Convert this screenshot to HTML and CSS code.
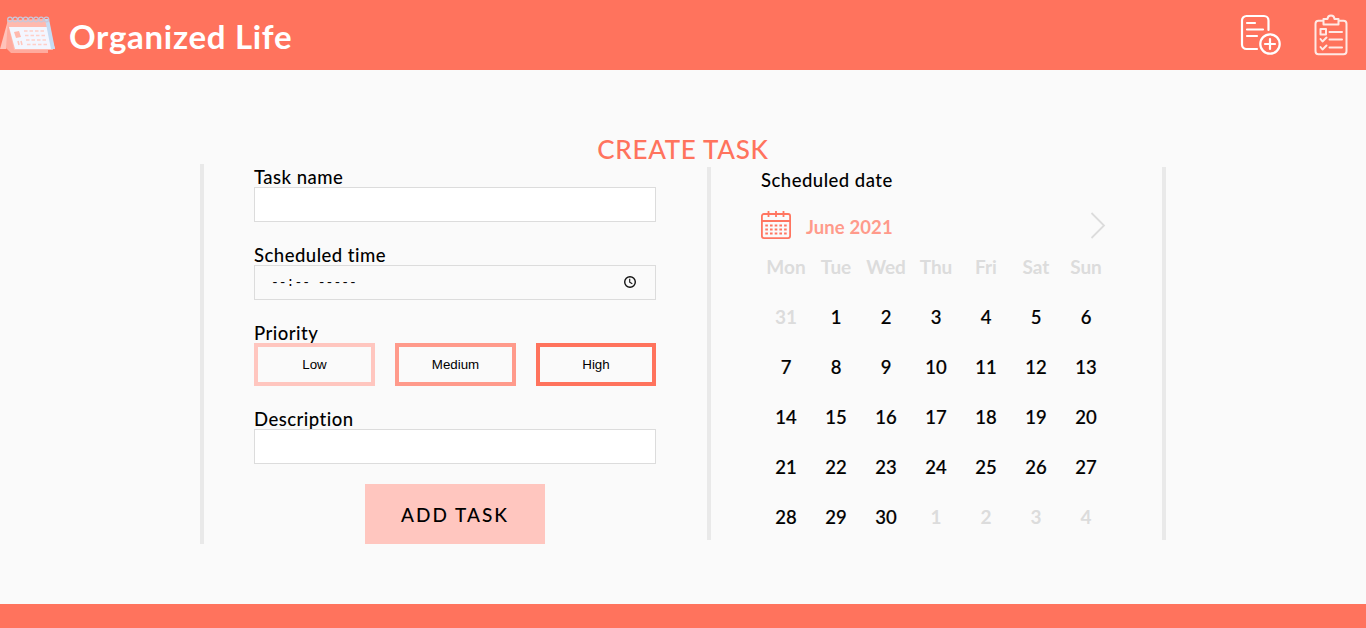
FILE: index.html
```html
<!DOCTYPE html>
<html lang="en">
<head>
<meta charset="utf-8">
<title>Organized Life</title>
<link rel="stylesheet" href="styles.css">
</head>
<body>
<header class="topbar">
  <svg class="logo" width="56" height="44" viewBox="0 0 56 44">
    <path d="M8 9 0 38h6l6-15z" fill="#ffc2b9"/>
    <path d="M8 9 6 37l5 5h37v-5z" fill="#ffaa9d"/>
    <path d="M7 9 14 39h39L46 8z" fill="#ffb9ae"/>
    <path d="m9 16 6 22h40L48 16z" fill="#f3f6ff"/>
    <path d="M45 8h4l6 30h-4z" fill="#c5dbf3"/>
    <g fill="none" stroke="#cbc6d8" stroke-width="1.300">
      <circle cx="10" cy="8.500" r="2.300"/><circle cx="15.200" cy="8.500" r="2.300"/><circle cx="20.400" cy="8.500" r="2.300"/><circle cx="25.600" cy="8.500" r="2.300"/><circle cx="30.800" cy="8.500" r="2.300"/><circle cx="36" cy="8.500" r="2.300"/><circle cx="41.200" cy="8.500" r="2.300"/><circle cx="46.400" cy="8.500" r="2.300"/>
    </g>
    <path d="m14 21 5-1 2 6-5 1z" fill="#ffb9ae"/>
    <path d="m18 30 1 4M21 30l1 4" stroke="#ffc6bd" stroke-width="1.500"/>
    <path d="M24 20h22M25 24.500h22M26 29h22M27 33.500h22" stroke="#ffcfc8" stroke-width="1.500" stroke-dasharray="3.500 2"/>
  </svg>
  <h1 class="brand">Organized Life</h1>
  <nav class="nav">
    <svg width="42" height="42" viewBox="0 0 42 42" fill="none" stroke="#fff" stroke-width="2.200" stroke-linecap="round">
      <path d="M17 35H6.500a4.500 4.500 0 0 1-4.500-4.500V6.500A4.500 4.500 0 0 1 6.500 2H24a4.500 4.500 0 0 1 4.500 4.500V16M7 9h8M7 15.500h16M7 22h10"/>
      <circle cx="30" cy="30" r="9.700"/><path d="M30 25v10M25 30h10"/>
    </svg>
    <svg width="34" height="42" viewBox="0 0 34 42" fill="none" stroke="#ffe9e5" stroke-width="2" stroke-linecap="round" stroke-linejoin="round">
      <path d="M8.500 6.800H4.500A3 3 0 0 0 1.500 9.800v27.500a3 3 0 0 0 3 3h25a3 3 0 0 0 3-3V9.800a3 3 0 0 0-3-3h-4"/>
      <path d="M9.500 10.500V5h4c.2-2.400 1.500-3.500 3.500-3.500S20.300 2.600 20.500 5h4v5.500z"/>
      <path d="M6.500 15h5.500v5.500H6.500zM15.500 18H28M15.500 25.500H28M15.500 33.500H28M6.500 25l2 2.500 4-4M6.500 33l2 2.500 4-4"/>
    </svg>
  </nav>
</header>
<main class="page">
  <h2 class="heading">CREATE TASK</h2>
  <div class="columns">
    <form class="form">
      <div class="field"><label class="label" for="name">Task name</label><input class="input" id="name" type="text"></div>
      <div class="field"><label class="label">Scheduled time</label>
        <div class="time"><span>--:-- -----</span>
          <svg class="clock" width="14" height="14" viewBox="0 0 14 14" fill="none" stroke="#111" stroke-width="1.400"><circle cx="7" cy="7" r="5.300"/><path d="M6.700 3.800v3.500l2.600 1.500" stroke-width="1.100"/></svg>
        </div>
      </div>
      <div class="field"><label class="label">Priority</label>
        <div class="levels"><button class="level low" type="button">Low</button><button class="level medium" type="button">Medium</button><button class="level high" type="button">High</button></div>
      </div>
      <div class="field"><label class="label" for="desc">Description</label><input class="input" id="desc" type="text"></div>
      <button class="submit" type="button">ADD TASK</button>
    </form>
    <section class="schedule">
      <div class="label">Scheduled date</div>
      <div class="month">
        <svg width="30" height="30" viewBox="0 0 30 30" fill="none" stroke="#ff7560" stroke-width="1.800">
          <rect x=".9" y="4" width="28.200" height="24.100" rx="2"/>
          <path d="M1 11h28M7.500 1v6M15 1v6M22.500 1v6" />
          <path d="M4.300 15.500h22M4.300 19.500h22M4.300 23.500h22" stroke-width="2" stroke-dasharray="2.600 2.100"/>
        </svg>
        <span class="month-name">June 2021</span>
        <svg class="next" width="16" height="28" viewBox="0 0 16 28" fill="none" stroke="#dcdcdc" stroke-width="1.800"><path d="m1.500 2 12.500 12.500L1.500 27"/></svg>
      </div>
      <div class="grid">
        <b>Mon</b><b>Tue</b><b>Wed</b><b>Thu</b><b>Fri</b><b>Sat</b><b>Sun</b>
        <b>31</b><span>1</span><span>2</span><span>3</span><span>4</span><span>5</span><span>6</span>
        <span>7</span><span>8</span><span>9</span><span>10</span><span>11</span><span>12</span><span>13</span>
        <span>14</span><span>15</span><span>16</span><span>17</span><span>18</span><span>19</span><span>20</span>
        <span>21</span><span>22</span><span>23</span><span>24</span><span>25</span><span>26</span><span>27</span>
        <span>28</span><span>29</span><span>30</span><b>1</b><b>2</b><b>3</b><b>4</b>
      </div>
    </section>
  </div>
</main>
<footer class="footer"></footer>
</body>
</html>
```
FILE: styles.css
```css
* { box-sizing: border-box; }
body { margin: 0; height: 628px; display: flex; flex-direction: column; overflow: hidden; background: #fafafa; color: #000; font-family: Lato, "Open Sans", sans-serif; font-variant-ligatures: none; }
.topbar { height: 70px; flex: none; display: flex; align-items: center; padding-right: 18px; background: #ff735d; }
.logo { margin: 0 13px 4px 0; }
.brand { margin: 1px 0 0; color: #fff; font-size: 33px; line-height: 40px; font-weight: 700; letter-spacing: .7px; white-space: nowrap; }
.nav { margin-left: auto; display: flex; gap: 32px; }
.page { flex: 1; padding-top: 64px; }
.heading { margin: 0; height: 30px; line-height: 30px; text-align: center; font-size: 26px; font-weight: 500; letter-spacing: .7px; color: #ff735d; }
.columns { display: flex; padding-left: 200px; align-items: flex-start; }
.form { width: 507px; height: 380px; padding: 0 51px 0 50px; border-left: 4px solid #e9e9e9; display: flex; flex-direction: column; gap: 20px; }
.field { display: flex; flex-direction: column; }
.label { height: 23px; line-height: 26px; font-size: 18.500px; font-weight: 500; letter-spacing: .48px; white-space: nowrap; }
.input { height: 35px; width: 100%; border: 1px solid #dcdcdc; background: #fff; padding: 0 16px; }
.time { height: 35px; display: flex; align-items: center; justify-content: space-between; padding: 0 18px 0 16px; border: 1px solid #dcdcdc; font-family: "Liberation Mono", monospace; font-size: 13px; white-space: pre; }
.clock { margin-bottom: 2px; }
.levels { display: grid; grid-template-columns: 121px 121px 120px; gap: 20px; }
.level { height: 43px; padding: 0; border: 4px solid; background: transparent; color: #000; font: 13.333px "Liberation Sans", sans-serif; }
.low { border-color: #ffc6bf; }
.medium { border-color: #ff9a8b; }
.high { border-color: #ff735d; }
.submit { align-self: center; width: 180px; height: 60px; flex: none; border: 0; padding: 0; background: #ffc6bf; color: #000; font-family: Lato, sans-serif; font-size: 19px; font-weight: 500; letter-spacing: 2px; }
.schedule { width: 459px; height: 373px; margin-top: 3px; padding-left: 50px; border: solid #e9e9e9; border-width: 0 4px; }
.month { width: 350px; height: 52px; padding: 18px 5px 0 0; display: flex; align-items: center; }
.month-name { margin: 3px 0 0 15px; font-size: 18.500px; font-weight: 700; letter-spacing: .1px; color: #ff9a8b; }
.next { margin-left: auto; }
.grid { display: grid; grid-template-columns: repeat(7, 50px); grid-auto-rows: 50px; place-items: center; font-size: 18.500px; font-weight: 500; line-height: 24px; -webkit-text-stroke: .2px; }
.grid b { font-size: 19px; font-weight: 700; color: #dcdcdc; -webkit-text-stroke: 0; }
.footer { height: 24px; flex: none; background: #ff735d; }
```
